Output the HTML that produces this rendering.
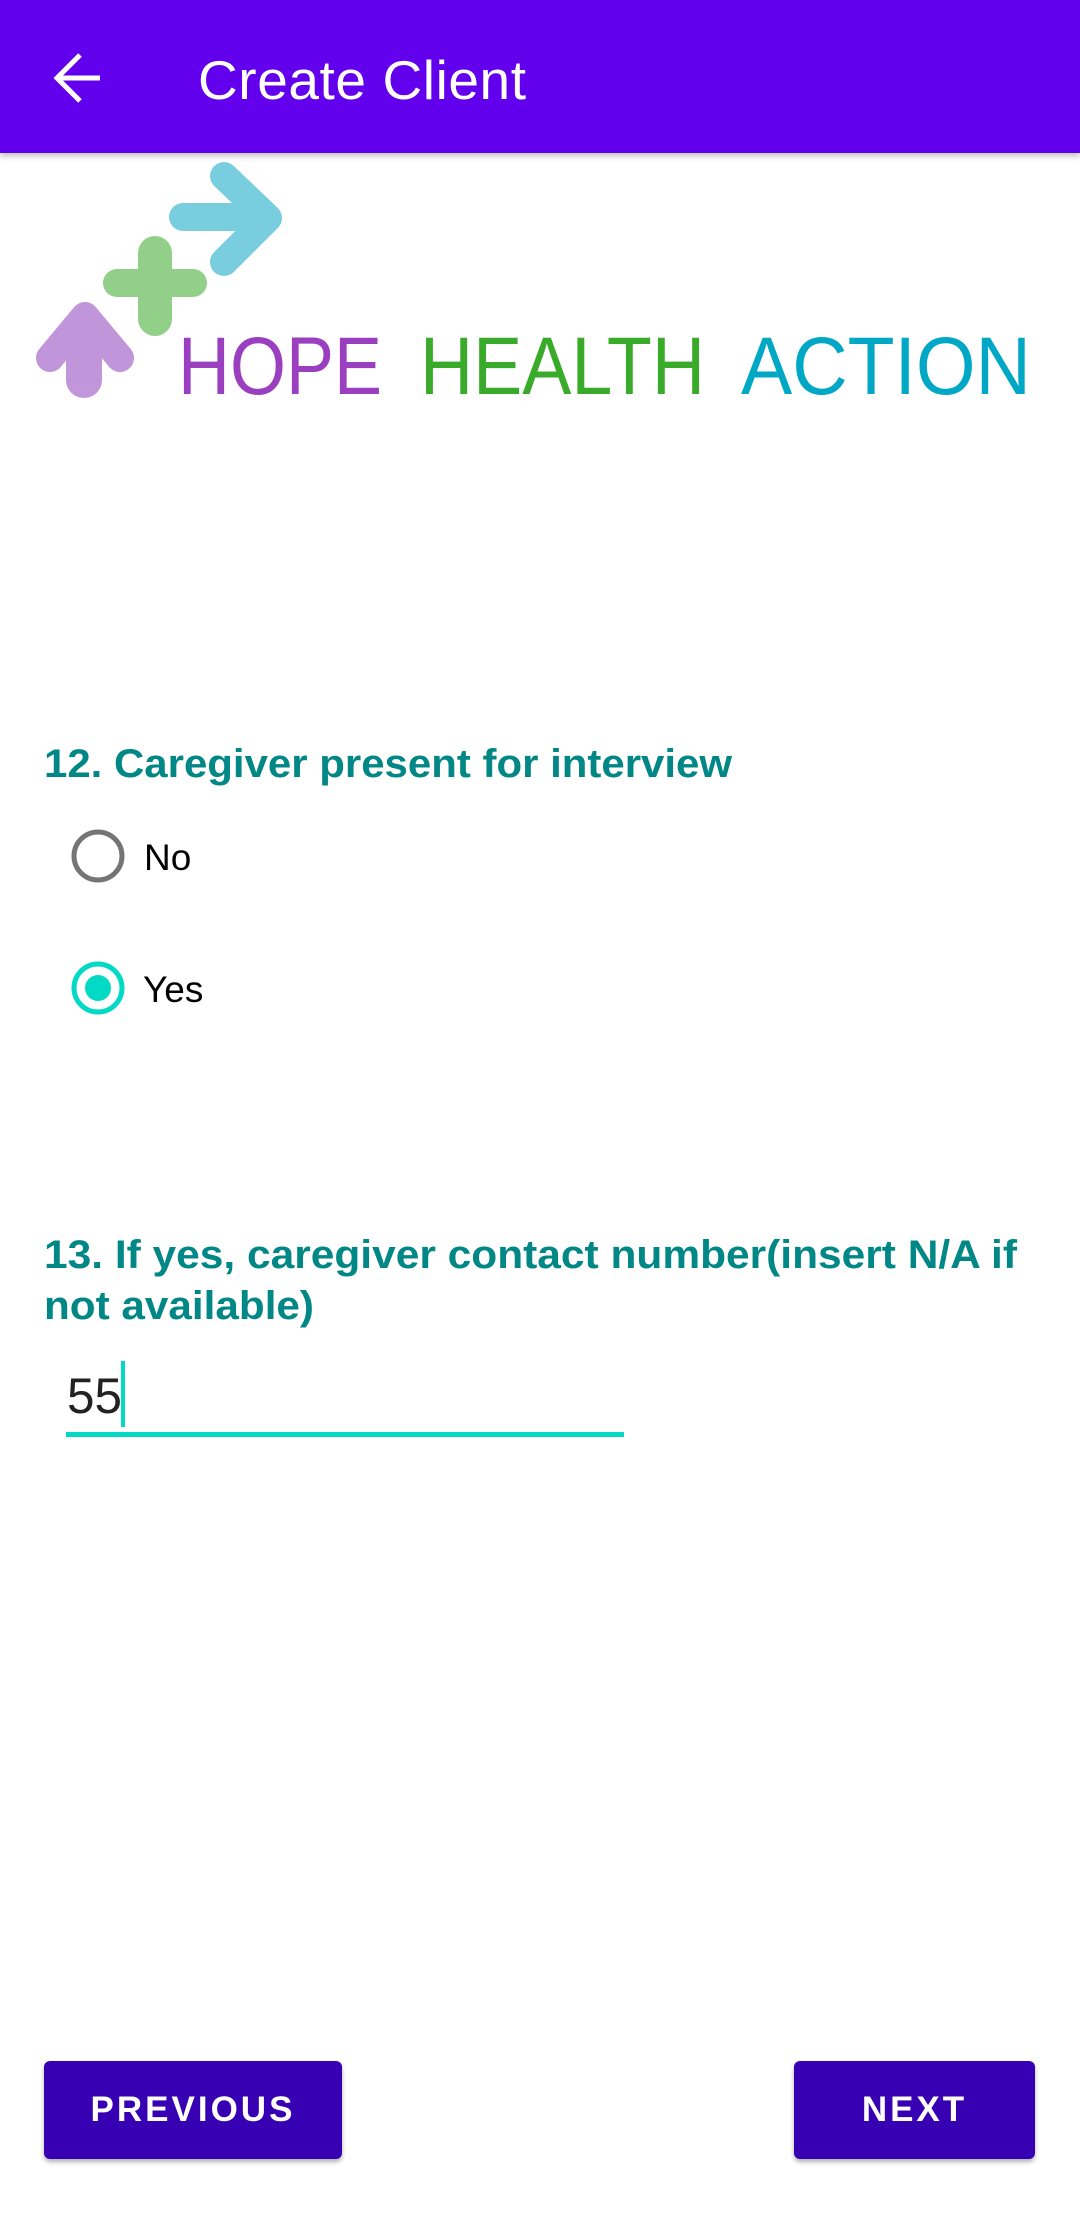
<!DOCTYPE html>
<html><head><meta charset="utf-8"><style>
html,body{margin:0;padding:0;width:1080px;height:2220px;background:#fff;overflow:hidden;font-family:"Liberation Sans",sans-serif;}
.bar{position:absolute;left:0;top:0;width:1080px;height:153px;background:#6200EE;box-shadow:0 3px 6px rgba(0,0,0,.25);}
svg{position:absolute;left:0;top:0;}
.btn{position:absolute;top:2061px;height:98px;background:#3700B3;border-radius:6px;box-shadow:0 3px 5px rgba(0,0,0,.3);color:#fff;font-size:35px;font-weight:bold;letter-spacing:3px;display:flex;align-items:center;justify-content:center;}
</style></head><body>
<div class="bar"></div>
<svg width="1080" height="2220" viewBox="0 0 1080 2220">
  <path d="M100 78 H58 M80 55 L57 78 L80 101" stroke="#fff" stroke-width="5" fill="none"/>
  <text x="198" y="99" font-size="55" fill="#fff" font-family="Liberation Sans, sans-serif" textLength="328">Create Client</text>
  <g opacity="0.55">
    <rect x="169" y="203" width="100" height="28" rx="14" fill="#0aa6c4"/>
    <path d="M224 176 L268 218 L224 262" fill="none" stroke="#0aa6c4" stroke-width="28" stroke-linejoin="round" stroke-linecap="round"/>
    <rect x="138" y="236" width="34" height="100" rx="17" fill="#3aaa2a"/>
    <rect x="103" y="269" width="104" height="28" rx="14" fill="#3aaa2a"/>
    <rect x="66" y="310" width="36" height="88" rx="18" fill="#8e3fbd"/>
    <path d="M50 358 L85 316 L120 358" fill="none" stroke="#8e3fbd" stroke-width="28" stroke-linejoin="round" stroke-linecap="round"/>
  </g>
  <text x="178" y="394" font-size="82" fill="#9a3fc0" font-family="Liberation Sans, sans-serif" textLength="204" lengthAdjust="spacingAndGlyphs">HOPE</text>
  <text x="420" y="394" font-size="82" fill="#3aaa2a" font-family="Liberation Sans, sans-serif" textLength="285" lengthAdjust="spacingAndGlyphs">HEALTH</text>
  <text x="741" y="394" font-size="82" fill="#00a8c6" font-family="Liberation Sans, sans-serif" textLength="290" lengthAdjust="spacingAndGlyphs">ACTION</text>
  <text x="44" y="777" font-size="40" font-weight="bold" fill="#018786" textLength="688" lengthAdjust="spacingAndGlyphs">12. Caregiver present for interview</text>
  <circle cx="98" cy="856" r="24" fill="none" stroke="#757575" stroke-width="5"/>
  <text x="144" y="870" font-size="37" fill="#000">No</text>
  <circle cx="98" cy="988" r="24" fill="none" stroke="#03DAC5" stroke-width="5"/>
  <circle cx="98" cy="988" r="13" fill="#03DAC5"/>
  <text x="143" y="1002" font-size="37" fill="#000">Yes</text>
  <text x="44" y="1268" font-size="40" font-weight="bold" fill="#018786" textLength="973" lengthAdjust="spacingAndGlyphs">13. If yes, caregiver contact number(insert N/A if</text>
  <text x="44" y="1319" font-size="40" font-weight="bold" fill="#018786" textLength="270" lengthAdjust="spacingAndGlyphs">not available)</text>
  <text x="67" y="1413" font-size="50" fill="#222" textLength="55" lengthAdjust="spacingAndGlyphs">55</text>
  <rect x="121" y="1361" width="4" height="66" fill="#03DAC5"/>
  <rect x="66" y="1432" width="558" height="5" fill="#03DAC5"/>
</svg>
<div class="btn" style="left:44px;width:298px;">PREVIOUS</div>
<div class="btn" style="left:794px;width:241px;">NEXT</div>
</body></html>
